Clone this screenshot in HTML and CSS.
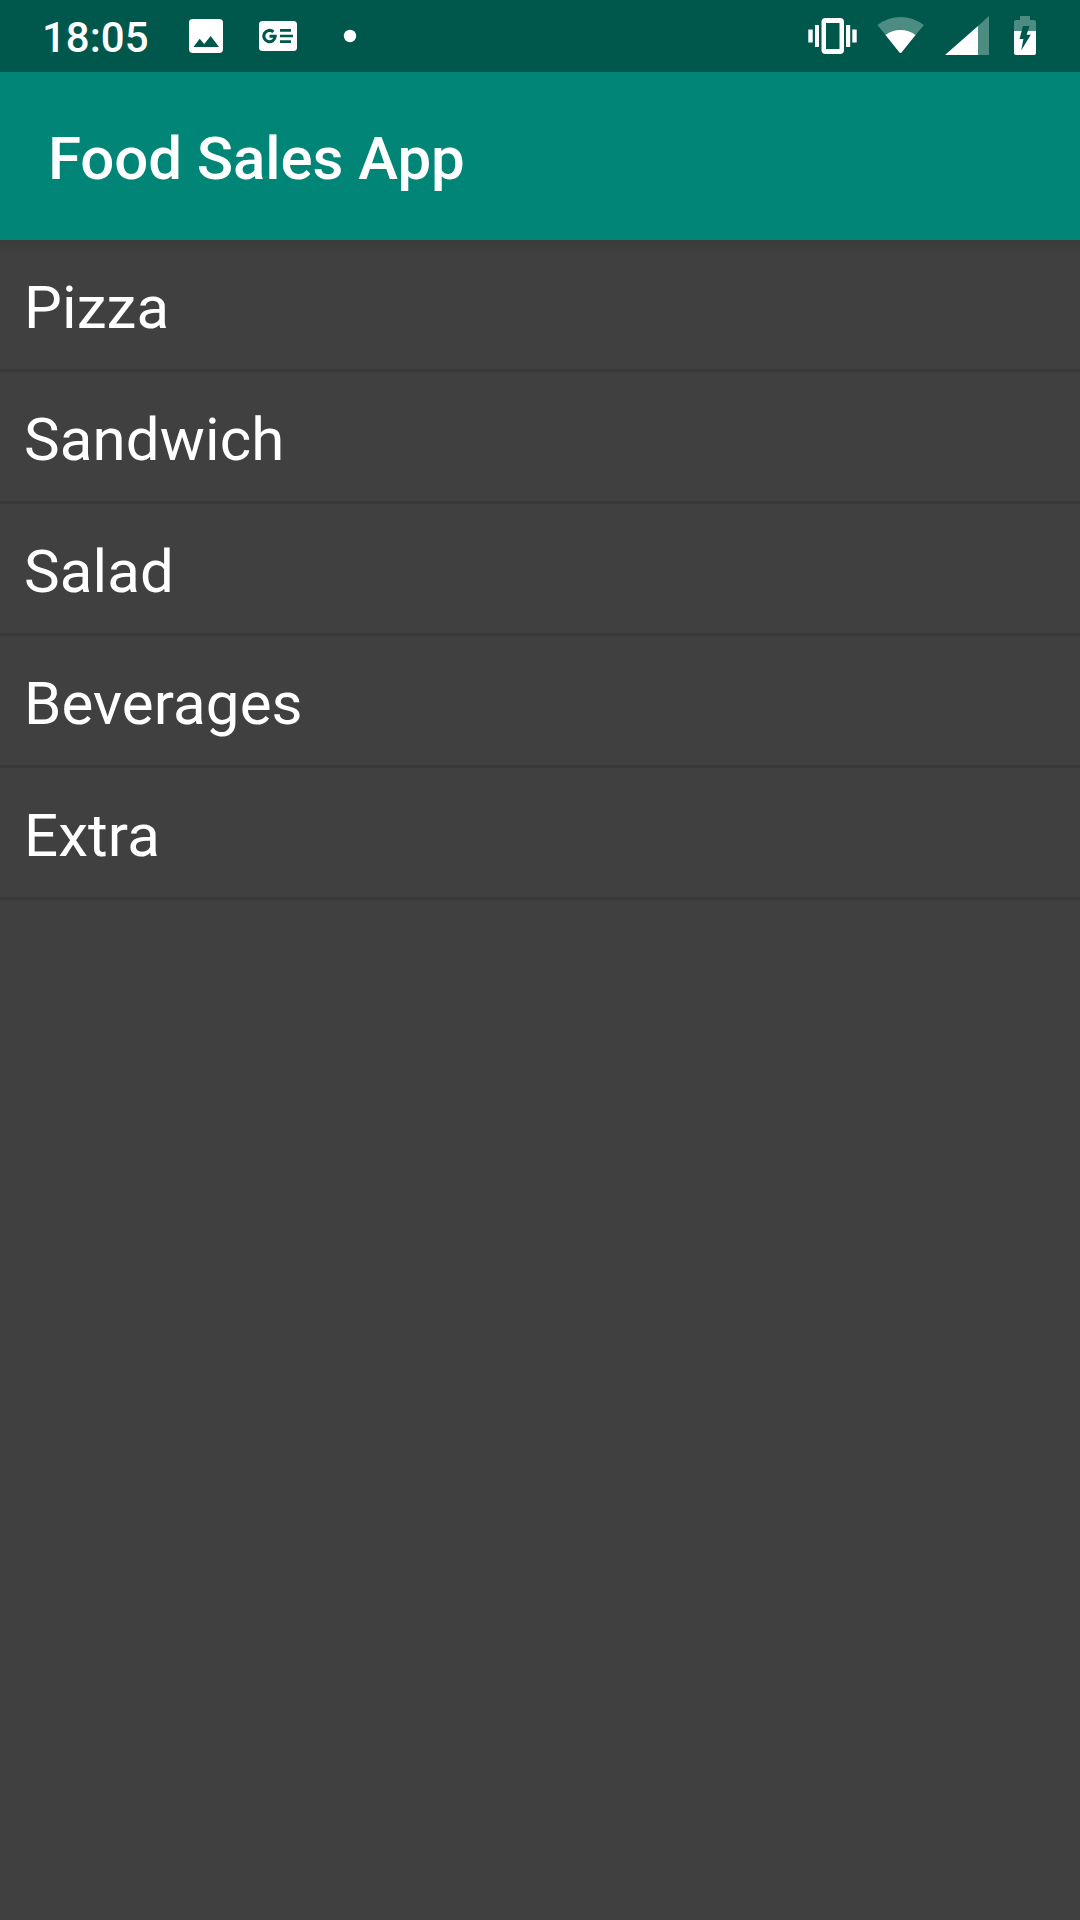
FILE: index.html
```html
<!DOCTYPE html>
<html lang="en">
<head>
<meta charset="utf-8">
<title>Food Sales App</title>
<link rel="stylesheet" href="styles.css">
</head>
<body>
<div class="screen">
  <div class="status-bar">
    <span class="clock">18:05</span>
    <div class="notifications">
      <svg class="icon" width="40" height="72" viewBox="0 0 40 72">
        <path fill-rule="evenodd" d="M6.700 19H33.300Q37 19 37 22.700V49.300Q37 53 33.300 53H6.700Q3 53 3 49.300V22.700Q3 19 6.700 19ZM7.500 47H33L24.700 36L18.200 44L13.700 38.700Z"/>
      </svg>
      <svg class="icon" width="44" height="72" viewBox="0 0 44 72">
        <rect x="3" y="21" width="38" height="30" rx="3.500"/>
        <path class="cutout-line" d="M17.400 31.900A5.700 5.700 0 1 0 19.200 36.300H13.500"/>
        <path class="cutout" d="M24 29H35V31.800H24ZM24 34.700H37V37.300H24ZM24 40.200H35V43H24Z"/>
      </svg>
      <svg class="icon dot" width="20" height="72" viewBox="0 0 20 72"><circle cx="10" cy="36" r="6.200"/></svg>
    </div>
    <div class="system">
      <svg class="icon vibrate" width="54" height="72" viewBox="0 0 54 72">
        <path fill-rule="evenodd" d="M19.500 18H34Q38 18 38 22V50Q38 54 34 54H19.500Q15.500 54 15.500 50V22Q15.500 18 19.500 18ZM20 23V49H33.500V23Z"/>
        <path d="M2.300 29.500H6.700V42.500H2.300ZM9 25H13V47H9ZM40 25H44.200V47H40ZM46.300 29.500H50.700V42.500H46.300Z"/>
      </svg>
      <svg class="icon wifi" width="52" height="72" viewBox="0 0 52 72">
        <path class="faint" d="M2.400 25Q13 16.900 25.500 16.900T48.900 25L25.500 53.300Z"/>
        <path d="M10.500 34.900Q17.200 30 25.500 30T40.500 34.900L26.500 52.500Q25.500 53.600 24.500 52.500Z"/>
      </svg>
      <svg class="icon signal" width="48" height="72" viewBox="0 0 48 72">
        <path class="faint" d="M35 26L46 16V55H35Z"/>
        <path d="M2 55L35 26V55Z"/>
      </svg>
      <svg class="icon battery" width="26" height="72" viewBox="0 0 26 72">
        <path class="faint" d="M8 16H18V20H22Q24 20 24 22V31H2V22Q2 20 4 20H8Z"/>
        <path d="M2 31H24V53Q24 55 22 55H4Q2 55 2 53Z"/>
        <path class="cutout" d="M11 26H17.500L14.700 34.700H18.800L9.200 50.500L11.400 39H7.500Z"/>
      </svg>
    </div>
  </div>
  <header class="app-bar"><h1 class="title">Food Sales App</h1></header>
  <ul class="menu">
    <li class="item">Pizza</li>
    <li class="item">Sandwich</li>
    <li class="item">Salad</li>
    <li class="item">Beverages</li>
    <li class="item">Extra</li>
  </ul>
</div>
</body>
</html>
```
FILE: styles.css
```css
* {
  box-sizing: border-box;
}

body {
  margin: 0;
  background: #404040;
  color: #fff;
  font-family: Roboto, sans-serif;
}

.screen {
  display: flex;
  flex-direction: column;
  width: 1080px;
  height: 1920px;
  overflow: hidden;
}

.status-bar {
  display: flex;
  align-items: center;
  height: 72px;
  padding: 0 42px;
  background: #00574b;
}

.clock {
  width: 144px;
  font-size: 42px;
  font-weight: 500;
  line-height: 72px;
  padding-top: 4px;
}

.notifications,
.system {
  display: flex;
}

.notifications {
  gap: 30px;
}

.system {
  margin-left: auto;
}

.icon {
  display: block;
  fill: #fff;
}

.dot {
  margin-left: 10px;
}

.wifi {
  margin-left: 15px;
}

.signal {
  margin-left: 16px;
}

.battery {
  margin-left: 21px;
}

.faint {
  fill: #4c8c82;
}

.cutout {
  fill: #00574b;
}

.cutout-line {
  fill: none;
  stroke: #00574b;
  stroke-width: 3.1px;
}

.app-bar {
  height: 168px;
  padding: 0 48px;
  background: #008577;
}

.title {
  margin: 0;
  padding-top: 3px;
  font-size: 60px;
  font-weight: 500;
  line-height: 168px;
  letter-spacing: -0.08px;
}

.menu {
  margin: 0;
  padding: 0;
  list-style: none;
  background: linear-gradient(#3a3a3a, #404040 14px);
}

.item {
  height: 132px;
  padding: 3px 24px 0;
  border-bottom: 3px solid #393939;
  font-size: 60px;
  line-height: 129px;
  letter-spacing: 0.12px;
}
```
